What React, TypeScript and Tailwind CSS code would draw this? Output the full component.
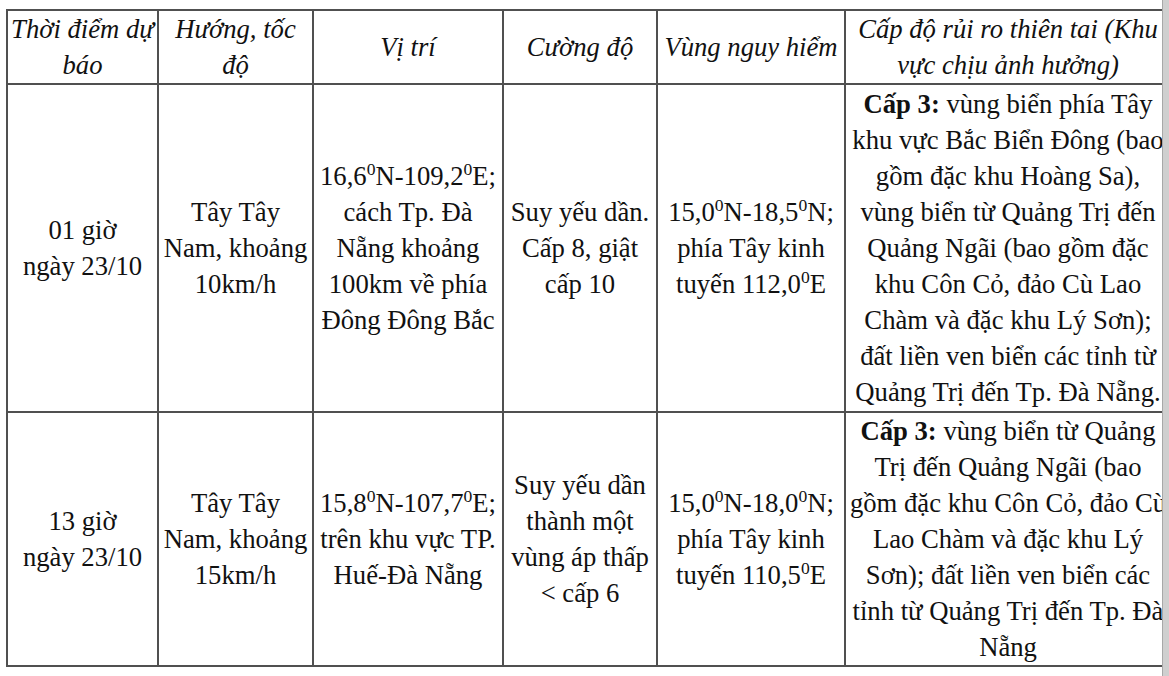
import React from 'react'

type Cell = React.ReactNode

function Deg() {
  return <sup className="text-[0.66em] top-[-0.55em]">0</sup>
}

function Lines({ lines }: { lines: Cell[] }) {
  return (
    <>
      {lines.map((l, i) => (
        <div key={i} className="whitespace-nowrap">
          {l}
        </div>
      ))}
    </>
  )
}

const headers: string[][] = [
  ['Thời điểm dự', 'báo'],
  ['Hướng, tốc', 'độ'],
  ['Vị trí'],
  ['Cường độ'],
  ['Vùng nguy hiểm'],
  ['Cấp độ rủi ro thiên tai (Khu', 'vực chịu ảnh hưởng)'],
]

const rows: { h: string; cells: Cell[][] }[] = [
  {
    h: 'h-[328px]',
    cells: [
      ['01 giờ', 'ngày 23/10'],
      ['Tây Tây', 'Nam, khoảng', '10km/h'],
      [
        <>16,6<Deg />N-109,2<Deg />E;</>,
        'cách Tp. Đà',
        'Nẵng khoảng',
        '100km về phía',
        'Đông Đông Bắc',
      ],
      ['Suy yếu dần.', 'Cấp 8, giật', 'cấp 10'],
      [
        <>15,0<Deg />N-18,5<Deg />N;</>,
        'phía Tây kinh',
        <>tuyến 112,0<Deg />E</>,
      ],
      [
        <><b>Cấp 3:</b> vùng biển phía Tây</>,
        'khu vực Bắc Biển Đông (bao',
        'gồm đặc khu Hoàng Sa),',
        'vùng biển từ Quảng Trị đến',
        'Quảng Ngãi (bao gồm đặc',
        'khu Côn Cỏ, đảo Cù Lao',
        'Chàm và đặc khu Lý Sơn);',
        'đất liền ven biển các tỉnh từ',
        'Quảng Trị đến Tp. Đà Nẵng.',
      ],
    ],
  },
  {
    h: 'h-[253px]',
    cells: [
      ['13 giờ', 'ngày 23/10'],
      ['Tây Tây', 'Nam, khoảng', '15km/h'],
      [
        <>15,8<Deg />N-107,7<Deg />E;</>,
        'trên khu vực TP.',
        'Huế-Đà Nẵng',
      ],
      ['Suy yếu dần', 'thành một', 'vùng áp thấp', '< cấp 6'],
      [
        <>15,0<Deg />N-18,0<Deg />N;</>,
        'phía Tây kinh',
        <>tuyến 110,5<Deg />E</>,
      ],
      [
        <><b>Cấp 3:</b> vùng biển từ Quảng</>,
        'Trị đến Quảng Ngãi (bao',
        'gồm đặc khu Côn Cỏ, đảo Cù',
        'Lao Chàm và đặc khu Lý',
        'Sơn); đất liền ven biển các',
        'tỉnh từ Quảng Trị đến Tp. Đà',
        'Nẵng',
      ],
    ],
  },
]

const cols = ['w-[151px]', 'w-[155px]', 'w-[190px]', 'w-[154px]', 'w-[188px]', 'w-[326px]']

export default function App() {
  return (
    <div className="flex h-[676px] w-[1169px] bg-white overflow-hidden">
      {/* bảng dự báo, bị cắt ở mép phải */}
      <div className="w-[1162px] shrink-0 overflow-hidden pt-[9px] pl-[6px]">
        <table
          className="table-fixed border-collapse w-[1164px] text-[26.67px] leading-[36px] text-[#111] text-center"
          style={{ fontFamily: '"Liberation Serif", "Times New Roman", serif' }}
        >
          <colgroup>
            {cols.map((c, i) => (
              <col key={i} className={c} />
            ))}
          </colgroup>
          <thead>
            <tr className="h-[74px]">
              {headers.map((h, i) => (
                <th key={i} className="border-2 border-[#505050] p-0 font-normal italic align-middle">
                  <Lines lines={h} />
                </th>
              ))}
            </tr>
          </thead>
          <tbody>
            {rows.map((r, ri) => (
              <tr key={ri} className={r.h}>
                {r.cells.map((c, ci) => (
                  <td key={ci} className="border-2 border-[#505050] p-0 align-middle">
                    <Lines lines={c} />
                  </td>
                ))}
              </tr>
            ))}
          </tbody>
        </table>
      </div>
      {/* thanh cuộn */}
      <div className="flex-1 bg-[#cfcfcf] border-l border-[#a8a8a8]" />
    </div>
  )
}
